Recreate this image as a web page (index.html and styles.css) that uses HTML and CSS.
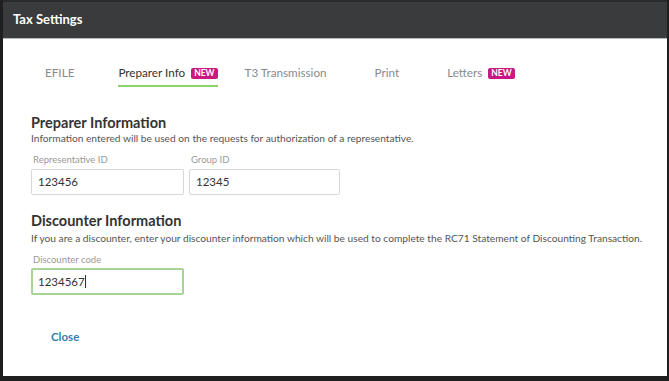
FILE: index.html
```html
<!DOCTYPE html>
<html lang="en">
<head>
    <meta charset="UTF-8">
    <meta name="viewport" content="width=device-width, initial-scale=1.0">
    <title>Tax Settings</title>
    <link rel="stylesheet" href="styles.css">
</head>
<body>
    <div class="window">
        <div class="titlebar">Tax Settings</div>
        <div class="content">
            <div class="tabs">
                <div class="tab">EFILE</div>
                <div class="tab active tab-new">Preparer Info <span class="badge">NEW</span></div>
                <div class="tab">T3 Transmission</div>
                <div class="tab">Print</div>
                <div class="tab tab-new">Letters <span class="badge">NEW</span></div>
            </div>

            <div class="section">
                <h2>Preparer Information</h2>
                <p class="desc">Information entered will be used on the requests for authorization of a representative.</p>
                <div class="fields">
                    <div class="field">
                        <label>Representative ID</label>
                        <div class="input">123456</div>
                    </div>
                    <div class="field">
                        <label>Group ID</label>
                        <div class="input narrow">12345</div>
                    </div>
                </div>
            </div>

            <div class="section">
                <h2>Discounter Information</h2>
                <p class="desc">If you are a discounter, enter your discounter information which will be used to complete the RC71 Statement of Discounting Transaction.</p>
                <div class="fields">
                    <div class="field">
                        <label>Discounter code</label>
                        <div class="input focused">1234567<span class="caret"></span></div>
                    </div>
                </div>
            </div>

            <div class="footer">
                <a class="close" href="#">Close</a>
            </div>
        </div>
    </div>
</body>
</html>
```

FILE: styles.css
```css
html, body {
    margin: 0;
    height: 100%;
}
body {
    background: #1f1f20;
    font-family: 'Lato', 'Open Sans', sans-serif;
    color: #333;
}
.window {
    margin: 0 2px 0 3px;
    height: 376px;
    background: #fff;
    display: flex;
    flex-direction: column;
}
.titlebar {
    height: 36px;
    background: #3a3b3d;
    border-top: 2px solid #2a2a2c;
    border-bottom: 1px solid #b9b9b9;
    color: #fff;
    font-size: 13px;
    font-weight: 700;
    line-height: 34px;
    padding-left: 10px;
}
.content {
    flex: 1;
    padding: 0 8px 0 28px;
}
.tabs {
    display: flex;
    padding-left: 14px;
    margin-top: 25px;
}
.tab {
    font-size: 11.7px;
    color: #8a8a8a;
    margin-right: 48px;
    padding: 0 0 5px;
    line-height: 16px;
    border-bottom: 2px solid transparent;
}
.tab:first-child {
    margin-right: 44px;
}
.tab-new {
    margin-right: 27px;
}
.tab.active {
    color: #333;
    border-bottom-color: #8fd16c;
}
.badge {
    display: inline-block;
    background: #c9187f;
    color: #fff;
    font-size: 8.5px;
    font-weight: 700;
    line-height: 11px;
    padding: 0 3px;
    border-radius: 2px;
    margin-left: 3px;
    vertical-align: 1px;
}
.section {
    margin-top: 28px;
}
.section + .section {
    margin-top: 18px;
}
h2 {
    margin: 0;
    font-size: 14.5px;
    font-weight: 700;
    color: #333;
    line-height: 16px;
}
.desc {
    margin: 0;
    font-size: 10.2px;
    color: #555;
    line-height: 14px;
}
.section + .section .desc {
    margin-top: 2px;
}
.fields {
    display: flex;
    gap: 5px;
    margin-top: 9px;
}
.field label {
    display: block;
    font-size: 9.5px;
    color: #999;
    line-height: 12px;
    margin-left: 2px;
    margin-bottom: 3px;
}
.section + .section .field label {
    margin-bottom: 2px;
}
.input {
    box-sizing: border-box;
    width: 153px;
    height: 26px;
    border: 1px solid #d8d8d8;
    border-radius: 2px;
    font-size: 11.5px;
    color: #333;
    line-height: 24px;
    padding-left: 6px;
}
.input.narrow {
    width: 151px;
}
.input.focused {
    border: 2px solid #a8d496;
    line-height: 23px;
    padding-left: 5px;
    height: 27px;
}
.caret {
    display: inline-block;
    width: 1px;
    height: 13px;
    background: #333;
    vertical-align: -2px;
}
.footer {
    margin-top: 30px;
    padding-left: 20px;
}
.close {
    color: #3580ad;
    font-size: 11.5px;
    font-weight: 700;
    text-decoration: none;
}
```
